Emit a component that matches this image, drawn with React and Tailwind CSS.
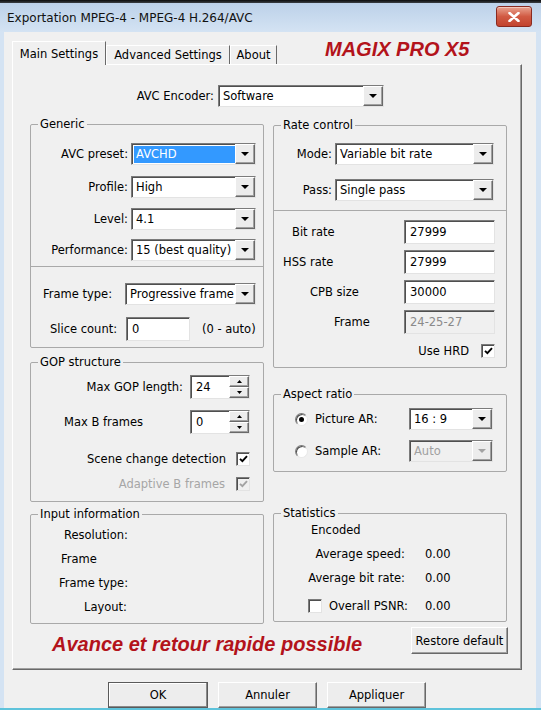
import React from 'react'

const sunken =
  'border border-t-[#7b7b7b] border-l-[#7b7b7b] border-r-[#e3e3e3] border-b-[#e3e3e3] shadow-[inset_1px_1px_0_#4f4f4f]'
const raised =
  'border border-t-white border-l-white border-r-[#696969] border-b-[#696969] shadow-[inset_-1px_-1px_0_#a0a0a0]'

function Tri({ up, small, disabled }) {
  const w = small ? 5 : 8
  const h = small ? 3 : 4
  const d = up ? `M0 ${h}H${w}L${w / 2} 0Z` : `M0 0H${w}L${w / 2} ${h}Z`
  return (
    <svg width={w} height={h} viewBox={`0 0 ${w} ${h}`}>
      <path d={d} fill={disabled ? '#a3a3a3' : '#000'} />
    </svg>
  )
}

function Combo({ value, w, hl, disabled }) {
  return (
    <div className={`${w} h-[22px] flex ${sunken} ${disabled ? 'bg-[#f0f0f0]' : 'bg-white'}`}>
      <div className="flex-1 min-w-0 flex items-center pl-[2px]">
        <span
          className={`h-[17px] w-full flex items-center px-[2px] whitespace-nowrap overflow-hidden ${
            hl ? 'bg-[#3399ff] text-white' : ''
          } ${disabled ? 'text-[#a0a0a0]' : ''}`}
        >
          {value}
        </span>
      </div>
      <div className={`w-[20px] flex items-center justify-center bg-[#ececec] ${raised}`}>
        <Tri disabled={disabled} />
      </div>
    </div>
  )
}

function Field({ value, w, disabled }) {
  return (
    <div
      className={`${w} h-[24px] pl-[5px] pt-[3px] leading-[16px] ${sunken} ${
        disabled ? 'bg-[#f0f0f0] text-[#8a8a8a]' : 'bg-white'
      }`}
    >
      {value}
    </div>
  )
}

function Spin({ value }) {
  return (
    <div className={`w-[60px] h-[24px] flex bg-white ${sunken}`}>
      <div className="flex-1 pl-[5px] pt-[3px] leading-[16px]">{value}</div>
      <div className="w-[20px] flex flex-col">
        <div className={`flex-1 flex items-center justify-center bg-[#ececec] ${raised}`}>
          <Tri up small />
        </div>
        <div className={`flex-1 flex items-center justify-center bg-[#ececec] ${raised}`}>
          <Tri small />
        </div>
      </div>
    </div>
  )
}

function Check({ checked, disabled }) {
  return (
    <div
      className={`w-[14px] h-[14px] flex items-center justify-center ${sunken} ${
        disabled ? 'bg-[#f0f0f0]' : 'bg-white'
      }`}
    >
      {checked && (
        <svg width="9" height="8" viewBox="0 0 9 8">
          <path
            d="M1 3.8L3.4 6.2L8 1.2"
            stroke={disabled ? '#a3a3a3' : '#000'}
            strokeWidth="1.9"
            fill="none"
          />
        </svg>
      )}
    </div>
  )
}

function Radio({ checked }) {
  return (
    <div className="w-[13px] h-[13px] rounded-full flex items-center justify-center bg-white border border-t-[#7b7b7b] border-l-[#7b7b7b] border-r-[#e8e8e8] border-b-[#e8e8e8] shadow-[inset_1px_1px_0_#505050]">
      {checked && <div className="w-[5px] h-[5px] rounded-full bg-black" />}
    </div>
  )
}

function Group({ title, className = '', children }) {
  return (
    <fieldset className={`w-[234px] border border-[#a9a9a9] rounded-[2px] ${className}`}>
      <legend className="ml-[7px] px-[2px] leading-[14px]">{title}</legend>
      {children}
    </fieldset>
  )
}

function Btn({ children, w, def }) {
  return (
    <div
      className={`${w} flex items-center justify-center bg-[#ededed] ${
        def
          ? 'border border-[#5a5a5a] shadow-[inset_-1px_-1px_0_#8a8a8a,inset_1px_1px_0_#ffffff]'
          : raised
      }`}
    >
      {children}
    </div>
  )
}

export default function App() {
  return (
    <div className="w-[541px] h-[710px] overflow-hidden flex flex-col bg-[#d4e3f3] text-[11.5px] leading-[14px] text-black font-[DejaVu_Sans,Verdana,sans-serif]">
      <div className="h-[3px] bg-gradient-to-b from-[#0d0d0d] to-[#3a3f45]" />
      {/* title bar */}
      <div className="h-[29px] flex items-start justify-between pl-[7px] pr-[9px] bg-gradient-to-b from-[#bcd1e9] to-[#d4e3f3]">
        <span className="mt-[7px] text-[12px] leading-[16px] text-[#111]">
          Exportation MPEG-4 - MPEG-4 H.264/AVC
        </span>
        <div className="mt-[3px] w-[36px] h-[21px] rounded-[3px] border border-[#8a2a20] bg-gradient-to-b from-[#e8a290] via-[#d15a43] to-[#c2432e] flex items-center justify-center shadow-[inset_0_1px_0_#f5c7ba]">
          <svg width="12" height="10" viewBox="0 0 12 10">
            <path d="M1.5 1L10.5 9M10.5 1L1.5 9" stroke="#fff" strokeWidth="2.6" strokeLinecap="round" />
          </svg>
        </div>
      </div>

      {/* client */}
      <div className="flex-1 ml-[4px] mr-[5px] bg-[#f0f0f0] flex flex-col pt-[9px] pl-[8px] pr-[14px] overflow-hidden">
        {/* tabs */}
        <div className="h-[24px] -mb-[1px] flex items-end relative z-10">
          <div className="w-[94px] h-[24px] bg-[#f0f0f0] border-t border-l border-t-white border-l-white border-r border-r-[#696969] flex items-start justify-center pt-[4px] leading-[16px]">
            Main Settings
          </div>
          <div className="w-[124px] h-[19px] mb-[1px] border-t border-l border-t-white border-l-white border-r border-r-[#696969] flex items-start justify-center pt-[1px] leading-[16px]">
            Advanced Settings
          </div>
          <div className="w-[47px] h-[19px] mb-[1px] border-t border-l border-t-white border-l-white border-r border-r-[#696969] flex items-start justify-center pt-[1px] leading-[16px]">
            About
          </div>
          <span className="self-start ml-[48px] -mt-[1px] leading-[18px] text-[20px] font-bold italic text-[#b3131b] font-[Liberation_Sans,Arial,sans-serif]">
            MAGIX PRO X5
          </span>
        </div>

        {/* panel */}
        <div className={`h-[606px] shrink-0 flex flex-col ${raised}`}>
          <div className="flex items-center pt-[20px] pl-[118px]">
            <span className="w-[83px] text-right">AVC Encoder:</span>
            <div className="ml-[4px]">
              <Combo value="Software" w="w-[166px]" />
            </div>
          </div>

          <div className="flex pl-[17px] gap-[9px]">
            {/* left column */}
            <div className="flex flex-col">
              <Group title="Generic" className="mt-[10px] pb-[6px]">
                {[
                  ['AVC preset:', 'AVCHD', 'mt-[12px]', true],
                  ['Profile:', 'High', 'mt-[11px]'],
                  ['Level:', '4.1', 'mt-[10px]'],
                  ['Performance:', '15 (best quality)', 'mt-[9px]'],
                ].map(([l, v, m, hl]) => (
                  <div key={l} className={`flex items-center ${m}`}>
                    <span className="w-[97px] text-right">{l}</span>
                    <div className="ml-[3px]">
                      <Combo value={v} w="w-[125px]" hl={hl} />
                    </div>
                  </div>
                ))}
                <div className="mt-[5px] border-t border-[#a9a9a9]" />
                <div className="flex items-center mt-[16px]">
                  <span className="w-[94px] pl-[12px]">Frame type:</span>
                  <Combo value="Progressive frame" w="w-[131px]" />
                </div>
                <div className="flex items-center mt-[12px]">
                  <span className="w-[95px] pl-[19px]">Slice count:</span>
                  <Field value="0" w="w-[64px]" />
                  <span className="ml-[12px]">(0 - auto)</span>
                </div>
              </Group>

              <Group title="GOP structure" className="mt-[7px] pb-[10px]">
                <div className="flex items-center mt-[6px]">
                  <span className="w-[159px] text-right pr-[7px]">Max GOP length:</span>
                  <Spin value="24" />
                </div>
                <div className="flex items-center mt-[11px]">
                  <span className="w-[159px] pl-[33px]">Max B frames</span>
                  <Spin value="0" />
                </div>
                <div className="flex items-center justify-end pr-[13px] mt-[18px]">
                  <span className="mr-[10px]">Scene change detection</span>
                  <Check checked />
                </div>
                <div className="flex items-center justify-end pr-[13px] mt-[11px]">
                  <span className="mr-[11px] text-[#a6a6a6]">Adaptive B frames</span>
                  <Check checked disabled />
                </div>
              </Group>

              <Group title="Input information" className="mt-[5px] pb-[4px]">
                <div className="mt-[2px] h-[24px] flex items-center pl-[33px]">Resolution:</div>
                <div className="h-[24px] flex items-center pl-[30px]">Frame</div>
                <div className="h-[24px] flex items-center pl-[28px]">Frame type:</div>
                <div className="h-[24px] flex items-center pl-[53px]">Layout:</div>
              </Group>
            </div>

            {/* right column */}
            <div className="flex flex-col">
              <Group title="Rate control" className="mt-[11px] pb-[9px]">
                <div className="flex items-center mt-[11px]">
                  <span className="w-[58px] text-right">Mode:</span>
                  <div className="ml-[3px]">
                    <Combo value="Variable bit rate" w="w-[159px]" />
                  </div>
                </div>
                <div className="flex items-center mt-[14px]">
                  <span className="w-[58px] text-right">Pass:</span>
                  <div className="ml-[3px]">
                    <Combo value="Single pass" w="w-[159px]" />
                  </div>
                </div>
                <div className="mt-[9px] border-t border-[#a9a9a9]" />
                <div className="flex items-center mt-[9px]">
                  <span className="w-[130px] pl-[18px]">Bit rate</span>
                  <Field value="27999" w="w-[91px]" />
                </div>
                <div className="flex items-center mt-[6px]">
                  <span className="w-[130px] pl-[9px]">HSS rate</span>
                  <Field value="27999" w="w-[91px]" />
                </div>
                <div className="flex items-center mt-[6px]">
                  <span className="w-[130px] pl-[36px]">CPB size</span>
                  <Field value="30000" w="w-[91px]" />
                </div>
                <div className="flex items-center mt-[6px]">
                  <span className="w-[130px] pl-[60px]">Frame</span>
                  <Field value="24-25-27" w="w-[91px]" disabled />
                </div>
                <div className="flex items-center justify-end pr-[11px] mt-[10px]">
                  <span className="mr-[12px]">Use HRD</span>
                  <Check checked />
                </div>
              </Group>

              <Group title="Aspect ratio" className="mt-[19px] pb-[9px]">
                <div className="flex items-center mt-[7px]">
                  <div className="w-[135px] flex items-center pl-[21px]">
                    <Radio checked />
                    <span className="ml-[7px]">Picture AR:</span>
                  </div>
                  <Combo value="16 : 9" w="w-[84px]" />
                </div>
                <div className="flex items-center mt-[10px]">
                  <div className="w-[135px] flex items-center pl-[21px]">
                    <Radio />
                    <span className="ml-[7px]">Sample AR:</span>
                  </div>
                  <Combo value="Auto" w="w-[84px]" disabled />
                </div>
              </Group>

              <Group title="Statistics" className="mt-[34px] pb-[5px]">
                <div className="h-[20px] flex items-center pl-[37px]">Encoded</div>
                <div className="h-[20px] mt-[4px] flex items-center">
                  <span className="w-[131px] text-right">Average speed:</span>
                  <span className="ml-[20px]">0.00</span>
                </div>
                <div className="h-[20px] mt-[4px] flex items-center">
                  <span className="w-[131px] text-right">Average bit rate:</span>
                  <span className="ml-[20px]">0.00</span>
                </div>
                <div className="h-[20px] mt-[8px] flex items-center pl-[34px]">
                  <Check />
                  <span className="w-[86px] text-right">Overall PSNR:</span>
                  <span className="ml-[17px]">0.00</span>
                </div>
              </Group>
            </div>
          </div>

          <div className="flex items-start mt-[3px] pl-[39px] pr-[13px]">
            <span className="mt-[5px] leading-[24px] text-[20px] font-bold italic text-[#b3131b] font-[Liberation_Sans,Arial,sans-serif]">
              Avance et retour rapide possible
            </span>
            <div className="ml-auto h-[27px] flex">
              <Btn w="w-[97px]">Restore default</Btn>
            </div>
          </div>
        </div>

        {/* buttons */}
        <div className="h-[26px] mt-[12px] shrink-0 flex gap-[10px] pl-[96px]">
          <Btn w="w-[100px]" def>
            OK
          </Btn>
          <Btn w="w-[99px]">Annuler</Btn>
          <Btn w="w-[99px]">Appliquer</Btn>
        </div>
      </div>
      <div className="h-[2px] bg-[#5ec3db]" />
    </div>
  )
}
